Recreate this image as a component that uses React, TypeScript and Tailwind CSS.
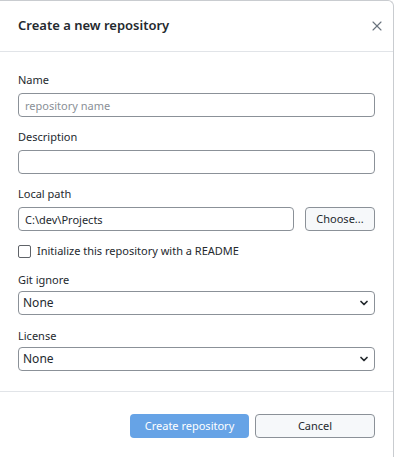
import React from 'react';
import { X, ChevronDown } from 'lucide-react';

const font = { fontFamily: '"Segoe UI", "Noto Sans", sans-serif' };

const Label: React.FC<{ children: React.ReactNode; tight?: boolean }> = ({ children, tight }) => (
  <div className={`text-[11px] leading-[16px] text-[#24292e] ${tight ? 'mb-[3px]' : 'mb-[5px]'}`}>{children}</div>
);

const inputCls =
  'h-[24px] w-full rounded-[4px] border border-[#8b9198] bg-white px-[6px] text-[11px] text-[#24292e] placeholder:text-[#8a9097] outline-none';

const Select: React.FC<{ value: string }> = ({ value }) => (
  <div className="relative">
    <div className="flex h-[24px] w-full items-center rounded-[4px] border border-[#8b9198] bg-white pl-[4px] text-[12px] text-[#24292e]">
      {value}
    </div>
    <ChevronDown className="absolute right-[5px] top-[6px] h-[12px] w-[12px] text-[#24292e]" strokeWidth={3.5} />
  </div>
);

export default function App() {
  return (
    <div className="h-[457px] w-[396px] bg-white" style={font}>
      <div className="flex h-[457px] w-[394px] flex-col rounded-tr-[6px] border-t border-r border-[#c9ccd0] bg-white">
        {/* Header */}
        <div className="flex h-[51px] items-center justify-between border-b border-[#e1e4e8] pl-[18px] pr-[8px]">
          <h1 className="text-[13px] font-semibold text-[#24292e]">Create a new repository</h1>
          <X className="h-[16px] w-[16px] text-[#6a737d]" strokeWidth={1.7} />
        </div>

        {/* Body */}
        <div className="flex flex-col px-[18px] pt-[20px] pb-[20px]">
          <Label>Name</Label>
          <input className={inputCls} placeholder="repository name" />

          <div className="mt-[12px]" />
          <Label>Description</Label>
          <input className={inputCls} />

          <div className="mt-[12px]" />
          <Label>Local path</Label>
          <div className="flex gap-[11px]">
            <input className={inputCls} defaultValue="C:\dev\Projects" />
            <button className="h-[24px] w-[70px] shrink-0 rounded-[4px] border border-[#8b9198] bg-[#f6f8fa] text-[11px] text-[#24292e]">
              Choose...
            </button>
          </div>

          <label className="mt-[12px] flex h-[16px] items-center gap-[6px] text-[11px] text-[#24292e]">
            <span className="h-[13px] w-[13px] rounded-[2px] border border-[#5f6368] bg-white" />
            Initialize this repository with a README
          </label>

          <div className="mt-[13px]" />
          <Label tight>Git ignore</Label>
          <Select value="None" />

          <div className="mt-[13px]" />
          <Label tight>License</Label>
          <Select value="None" />
        </div>

        {/* Footer */}
        <div className="flex justify-end gap-[6px] border-t border-[#e1e4e8] px-[18px] pt-[22px]">
          <button className="h-[24px] w-[119px] rounded-[4px] bg-[#66a3e6] text-[11px] text-white">
            Create repository
          </button>
          <button className="h-[24px] w-[120px] rounded-[4px] border border-[#8b9198] bg-[#f6f8fa] text-[11px] text-[#24292e]">
            Cancel
          </button>
        </div>
      </div>
    </div>
  );
}
